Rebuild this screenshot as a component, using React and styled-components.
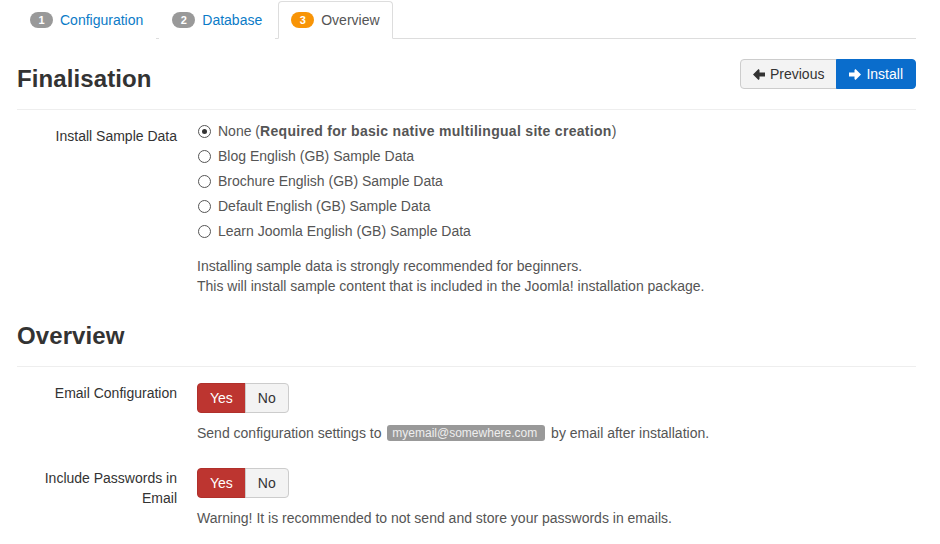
import React from "react";
import styled, { createGlobalStyle } from "styled-components";

const Global = createGlobalStyle`
  html, body { margin: 0; padding: 0; background: #fff; }
  body { font-family: "Liberation Sans", Arial, sans-serif; font-size: 14px; line-height: 20px; color: #333; }
`;

const Page = styled.div`
  width: 899px;
  margin-left: 17px;
`;

const Tabs = styled.ul`
  display: flex;
  list-style: none;
  margin: 0;
  padding: 1px 0 0 0;
  border-bottom: 1px solid #ddd;
`;

const Tab = styled.li`
  margin-right: 3px;
  margin-bottom: -1px;
`;

const TabLink = styled.a`
  display: flex;
  align-items: center;
  gap: 7px;
  padding: 8px 12px;
  line-height: 20px;
  border: 1px solid ${(p) => (p.$active ? "#ddd" : "transparent")};
  border-bottom-color: ${(p) => (p.$active ? "#fff" : "transparent")};
  border-radius: 4px 4px 0 0;
  background: #fff;
  color: ${(p) => (p.$active ? "#555" : "#0b7bc7")};
  text-decoration: none;
  cursor: pointer;
`;

const Badge = styled.span`
  display: inline-block;
  min-width: 7px;
  padding: 1px 8px;
  font-size: 11px;
  font-weight: bold;
  line-height: 14px;
  color: #fff;
  text-align: center;
  border-radius: 9px;
  background: ${(p) => (p.$active ? "#f89406" : "#999")};
`;

const SectionHeader = styled.div`
  display: flex;
  justify-content: space-between;
  align-items: flex-start;
  margin-top: ${(p) => p.$top}px;
  padding-bottom: 10px;
  border-bottom: 1px solid #eee;
`;

const Title = styled.h3`
  margin: 0;
  font-size: 24px;
  line-height: 40px;
  font-weight: bold;
  letter-spacing: 0.1px;
  color: #333;
`;

const BtnGroup = styled.div`
  display: flex;
`;

const Button = styled.button`
  display: inline-flex;
  align-items: center;
  gap: 5px;
  height: 30px;
  padding: 4px 12px;
  font-family: inherit;
  font-size: 14px;
  line-height: 20px;
  border: 1px solid ${(p) => (p.$variant === "primary" ? "#0a6dcc" : p.$variant === "danger" ? "#b0302b" : "#ccc")};
  background: ${(p) => (p.$variant === "primary" ? "#0a6dcc" : p.$variant === "danger" ? "#bd3530" : "#f3f3f3")};
  color: ${(p) => (p.$variant === "primary" || p.$variant === "danger" ? "#fff" : "#333")};
  border-radius: 0;
  cursor: pointer;
  &:first-child { border-radius: 4px 0 0 4px; }
  &:last-child { border-radius: 0 4px 4px 0; }
  & + & { margin-left: -1px; }
`;

const FormGroup = styled.div`
  display: grid;
  grid-template-columns: 160px 1fr;
  column-gap: 20px;
  margin-top: ${(p) => p.$top}px;
`;

const Label = styled.label`
  text-align: right;
  padding-top: ${(p) => p.$pad || 0}px;
  color: #333;
  line-height: 20px;
`;

const Controls = styled.div`
  display: flex;
  flex-direction: column;
  align-items: flex-start;
`;

const RadioRow = styled.label`
  display: flex;
  align-items: center;
  gap: 7px;
  height: 20px;
  margin-bottom: 5px;
  color: #555;
  padding-left: 1px;
`;

const Strong = styled.b`
  letter-spacing: 0.3px;
`;

const RadioCircle = styled.span`
  position: relative;
  width: 11px;
  height: 11px;
  border: 1px solid #555;
  border-radius: 50%;
  background: #fff;
  &::after {
    content: "";
    display: ${(p) => (p.$checked ? "block" : "none")};
    position: absolute;
    left: 3px;
    top: 3px;
    width: 5px;
    height: 5px;
    border-radius: 50%;
    background: #333;
  }
`;

const Help = styled.div`
  margin-top: ${(p) => p.$top}px;
  color: #555;
  line-height: 20px;
`;

const EmailTag = styled.span`
  display: inline-block;
  padding: 0 8px 0 5px;
  margin: 0 2px 0 2px;
  font-size: 12px;
  line-height: 16px;
  color: #eee;
  background: #999;
  border-radius: 3px;
  vertical-align: 1px;
`;

const Arrow = ({ dir }) => (
  <svg width="12" height="11" viewBox="0 0 12 11" aria-hidden="true">
    {dir === "left" ? (
      <path d="M0 5.5 L5.5 0 L6.5 1 L6.5 3.5 L12 3.5 L12 7.5 L6.5 7.5 L6.5 10 L5.5 11 Z" fill="currentColor" />
    ) : (
      <path d="M12 5.5 L6.5 0 L5.5 1 L5.5 3.5 L0 3.5 L0 7.5 L5.5 7.5 L5.5 10 L6.5 11 Z" fill="currentColor" />
    )}
  </svg>
);

const tabs = [
  { n: 1, label: "Configuration" },
  { n: 2, label: "Database" },
  { n: 3, label: "Overview", active: true },
];

const samples = [
  "Blog English (GB) Sample Data",
  "Brochure English (GB) Sample Data",
  "Default English (GB) Sample Data",
  "Learn Joomla English (GB) Sample Data",
];

const Toggle = () => (
  <BtnGroup>
    <Button $variant="danger">Yes</Button>
    <Button>No</Button>
  </BtnGroup>
);

export default function App() {
  return (
    <>
      <Global />
      <Page>
        <Tabs>
          {tabs.map((t) => (
            <Tab key={t.n}>
              <TabLink $active={t.active}>
                <Badge $active={t.active}>{t.n}</Badge>
                {t.label}
              </TabLink>
            </Tab>
          ))}
        </Tabs>

        <SectionHeader $top={20}>
          <Title>Finalisation</Title>
          <BtnGroup>
            <Button>
              <Arrow dir="left" /> Previous
            </Button>
            <Button $variant="primary">
              <Arrow dir="right" /> Install
            </Button>
          </BtnGroup>
        </SectionHeader>

        <FormGroup $top={11}>
          <Label $pad={5}>Install Sample Data</Label>
          <Controls>
            <RadioRow>
              <RadioCircle $checked />
              <span>
                None (<Strong>Required for basic native multilingual site creation</Strong>)
              </span>
            </RadioRow>
            {samples.map((s) => (
              <RadioRow key={s}>
                <RadioCircle />
                <span>{s}</span>
              </RadioRow>
            ))}
            <Help $top={10}>
              Installing sample data is strongly recommended for beginners.
              <br />
              This will install sample content that is included in the Joomla! installation package.
            </Help>
          </Controls>
        </FormGroup>

        <SectionHeader $top={20}>
          <Title>Overview</Title>
        </SectionHeader>

        <FormGroup $top={16}>
          <Label>Email Configuration</Label>
          <Controls>
            <Toggle />
            <Help $top={10}>
              Send configuration settings to <EmailTag>myemail@somewhere.com</EmailTag> by email after installation.
            </Help>
          </Controls>
        </FormGroup>

        <FormGroup $top={25}>
          <Label>
            Include Passwords in
            <br />
            Email
          </Label>
          <Controls>
            <Toggle />
            <Help $top={10}>Warning! It is recommended to not send and store your passwords in emails.</Help>
          </Controls>
        </FormGroup>
      </Page>
    </>
  );
}
